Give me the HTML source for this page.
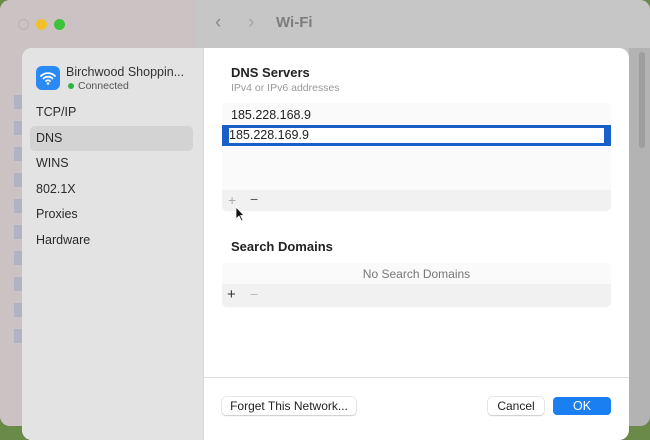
<!DOCTYPE html><html><head><style>
body{margin:0;width:650px;height:434px;overflow:hidden;position:relative;font-family:"Liberation Sans",sans-serif;background:#6a8a4a}
.a{position:absolute}
</style></head><body>
<div class="a" style="left:0;top:0;width:650px;height:426px;background:#c3c3c3;border-radius:10px;overflow:hidden">
 <div class="a" style="left:0;top:0;width:196px;height:426px;background:#cbc3c3"></div>
 <div class="a" style="left:196px;top:0;width:454px;height:48px;background:#c6c6c6"></div>
 <div class="a" style="left:629px;top:48px;width:21px;height:378px;background:#b3b3b3"></div>
 <div class="a" style="left:639px;top:52px;width:6px;height:96px;background:#9e9e9e;border-radius:3px"></div>
 <div class="a" style="left:18px;top:19px;width:11px;height:11px;border-radius:50%;border:1px solid #b9b0b0;box-sizing:border-box"></div>
 <div class="a" style="left:36px;top:19px;width:11px;height:11px;border-radius:50%;background:#f2c029"></div>
 <div class="a" style="left:54px;top:19px;width:11px;height:11px;border-radius:50%;background:#3ec23a"></div>
 <div class="a" style="left:215px;top:12px;font-size:19px;color:#8a8a8a">&#8249;</div>
 <div class="a" style="left:248px;top:12px;font-size:19px;color:#a5a5a5">&#8250;</div>
 <div class="a" style="left:276px;top:14px;font-size:15px;font-weight:bold;color:#7d7d7d">Wi-Fi</div>
 <div class="a" style="left:14px;top:95px;width:10px;height:260px;background:repeating-linear-gradient(#8a9ac0 0 14px,transparent 14px 26px);opacity:.4"></div>
</div>
<div class="a" style="left:22px;top:48px;width:607px;height:392px;background:#fff;border-radius:10px;overflow:hidden">
 <div class="a" style="left:0;top:0;width:181px;height:392px;background:#e4e3e3;border-right:1px solid #d6d6d6"></div>
 <div class="a" style="left:14px;top:18px;width:24px;height:24px;border-radius:6px;background:#2a8af5">
  <svg width="24" height="24" viewBox="0 0 24 24"><path d="M5 10a10 10 0 0 1 14 0M7.5 12.5a6.5 6.5 0 0 1 9 0M10 15a3 3 0 0 1 4 0" stroke="#fff" stroke-width="1.8" fill="none" stroke-linecap="round"/><circle cx="12" cy="17.5" r="1.3" fill="#fff"/></svg></div>
 <div class="a" style="left:44px;top:17px;font-size:12.5px;color:#333">Birchwood Shoppin...</div>
 <div class="a" style="left:46px;top:35px;width:6px;height:6px;border-radius:50%;background:#2fb443"></div>
 <div class="a" style="left:56px;top:32px;font-size:10.5px;color:#555">Connected</div>
 <div class="a" style="left:8px;top:78px;width:163px;height:25px;background:#d3d3d3;border-radius:5px"></div>
 <div class="a" style="left:14px;top:52px;font-size:12.5px;color:#2a2a2a;line-height:25.5px">TCP/IP<br>DNS<br>WINS<br>802.1X<br>Proxies<br>Hardware</div>
 <div class="a" style="left:209px;top:17px;font-size:13px;font-weight:bold;color:#222">DNS Servers</div>
 <div class="a" style="left:209px;top:34px;font-size:10.5px;color:#999">IPv4 or IPv6 addresses</div>
 <div class="a" style="left:200px;top:55px;width:389px;height:108px;background:#fafafa;border-radius:5px;overflow:hidden">
  <div class="a" style="left:0;top:87px;width:389px;height:21px;background:#f1f1f1"></div>
  <div class="a" style="left:9px;top:5px;font-size:12.5px;color:#222">185.228.168.9</div>
  <div class="a" style="left:6px;top:89px;font-size:14px;color:#aaa">+</div>
  <div class="a" style="left:28px;top:88px;font-size:14px;color:#555">&#8722;</div>
 </div>
 <div class="a" style="left:200px;top:77px;width:389px;height:21px;background:#1a5fc8"></div>
 <div class="a" style="left:207px;top:80px;width:375px;height:15px;background:#fff;font-size:12.5px;color:#222;line-height:15px">185.228.169.9</div>
 <svg class="a" style="left:213px;top:158px" width="10" height="16" viewBox="0 0 10 16"><path d="M1 1v12l3-3 2.5 5 1.5-.7-2.4-4.8H9z" fill="#111" stroke="#fff" stroke-width=".8"/></svg>
 <div class="a" style="left:209px;top:191px;font-size:13px;font-weight:bold;color:#222">Search Domains</div>
 <div class="a" style="left:200px;top:215px;width:389px;height:44px;background:#fafafa;border-radius:5px;overflow:hidden">
  <div class="a" style="left:0;top:0;width:389px;height:21px;font-size:12px;color:#777;text-align:center;line-height:22px">No Search Domains</div>
  <div class="a" style="left:0;top:21px;width:389px;height:23px;background:#f1f1f1"></div>
  <div class="a" style="left:5px;top:23px;font-size:15px;color:#333">+</div>
  <div class="a" style="left:28px;top:23px;font-size:14px;color:#bbb">&#8722;</div>
 </div>
 <div class="a" style="left:182px;top:329px;width:425px;height:1px;background:#dedede"></div>
 <div class="a" style="left:200px;top:349px;width:134px;height:18px;border-radius:4px;background:#fff;box-shadow:0 0 0 .5px #ccc,0 1px 1px #ccc;font-size:12px;color:#222;text-align:center;line-height:18px">Forget This Network...</div>
 <div class="a" style="left:466px;top:349px;width:56px;height:18px;border-radius:4px;background:#fff;box-shadow:0 0 0 .5px #ccc,0 1px 1px #ccc;font-size:12px;color:#222;text-align:center;line-height:18px">Cancel</div>
 <div class="a" style="left:531px;top:349px;width:58px;height:18px;border-radius:4px;background:#1a7ff0;font-size:12.5px;color:#fff;text-align:center;line-height:18px">OK</div>
</div>
</body></html>
